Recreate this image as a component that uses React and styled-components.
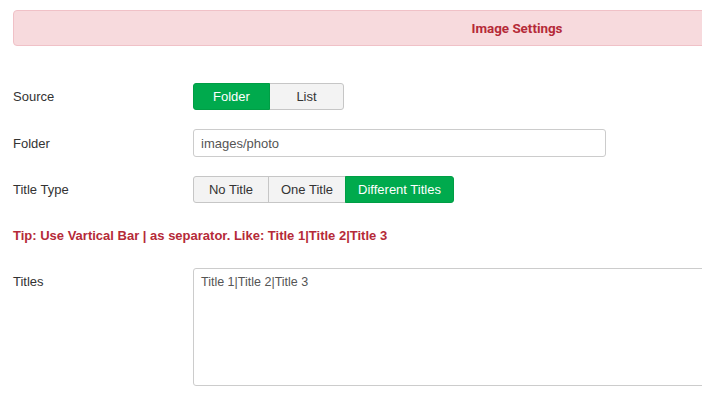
import styled, { createGlobalStyle } from 'styled-components';

const GlobalStyle = createGlobalStyle`
    body {
        margin: 0;
        background: #fff;
        overflow: hidden;
        font-family: 'Helvetica Neue', Helvetica, 'Liberation Sans', Arial, sans-serif;
        font-size: 13px;
        color: #333;
    }
`;

const Viewport = styled.div`
    width: 702px;
    height: 414px;
    overflow: hidden;
`;

const Page = styled.div`
    padding: 10px 0 0 13px;
    width: 1008px;
`;

const Header = styled.div`
    height: 34px;
    display: flex;
    align-items: center;
    justify-content: center;
    background: #f7dadd;
    border: 1px solid #f0c1c7;
    border-radius: 4px;
    font-family: Roboto, 'Liberation Sans', sans-serif;
    font-weight: 700;
    font-size: 13.4px;
    color: #b52a38;
`;

const Form = styled.div`
    margin-top: 37px;
    display: grid;
    grid-template-columns: 180px 1fr;
    row-gap: 19px;
    align-items: center;
`;

const Label = styled.label`
    font-size: 13px;
    color: #333;
    align-self: ${({ top }) => (top ? 'start' : 'center')};
    padding-top: ${({ top }) => (top ? '6px' : '0')};
`;

const Group = styled.div`
    display: flex;
    height: 27px;
`;

const Toggle = styled.button`
    position: relative;
    z-index: ${({ active }) => (active ? 1 : 0)};
    height: 27px;
    padding: 0;
    width: ${({ w }) => w}px;
    font-family: inherit;
    font-size: 13px;
    border: 1px solid ${({ active }) => (active ? '#009e45' : '#c6c6c6')};
    background: ${({ active }) => (active ? '#00aa4d' : '#f3f3f3')};
    color: ${({ active }) => (active ? '#fff' : '#333')};
    border-radius: 0;
    outline: none;
    & + & {
        margin-left: -1px;
    }
    &:first-child {
        border-radius: 3px 0 0 3px;
    }
    &:last-child {
        border-radius: 0 3px 3px 0;
    }
`;

const Input = styled.input`
    box-sizing: border-box;
    width: 413px;
    height: 28px;
    padding: 0 7px;
    font-family: inherit;
    font-size: 13px;
    color: #555;
    border: 1px solid #ccc;
    border-radius: 3px;
    outline: none;
`;

const Tip = styled.div`
    grid-column: 1 / -1;
    font-weight: 700;
    font-size: 13px;
    color: #b52a38;
    margin-top: 6px;
    margin-bottom: 6px;
`;

const TextArea = styled.textarea`
    box-sizing: border-box;
    width: 815px;
    height: 118px;
    padding: 6px 7px;
    font-family: 'Liberation Sans', Arial, sans-serif;
    font-size: 12.5px;
    color: #555;
    border: 1px solid #ccc;
    border-radius: 3px;
    resize: none;
    outline: none;
`;

const App = () => (
    <Viewport>
        <GlobalStyle />
        <Page>
            <Header>Image Settings</Header>
            <Form>
                <Label>Source</Label>
                <Group>
                    <Toggle active w={77}>Folder</Toggle>
                    <Toggle w={75}>List</Toggle>
                </Group>

                <Label>Folder</Label>
                <Input defaultValue="images/photo" />

                <Label>Title Type</Label>
                <Group>
                    <Toggle w={76}>No Title</Toggle>
                    <Toggle w={78}>One Title</Toggle>
                    <Toggle active w={109}>Different Titles</Toggle>
                </Group>

                <Tip>Tip: Use Vartical Bar | as separator. Like: Title 1|Title 2|Title 3</Tip>

                <Label top>Titles</Label>
                <TextArea defaultValue="Title 1|Title 2|Title 3" />
            </Form>
        </Page>
    </Viewport>
);

export default App;
